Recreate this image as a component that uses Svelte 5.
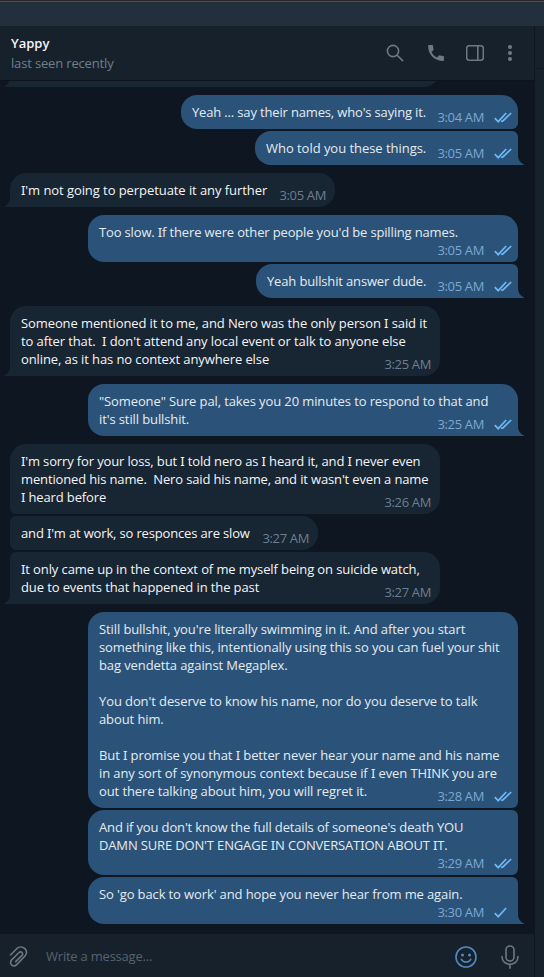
<script>
	let draft = '';

	// width and tracking are in px
	const messages = [
		{
			side: 'out', first: true, width: 337, tracking: -0.16, time: '3:04 AM',
			lines: ["Yeah ... say their names, who's saying it."]
		},
		{ side: 'out', last: true, width: 263, tracking: -0.04, time: '3:05 AM', lines: ['Who told you these things.'] },
		{
			side: 'in', first: true, last: true, width: 325, tracking: -0.07, time: '3:05 AM',
			lines: ["I'm not going to perpetuate it any further"]
		},
		{
			side: 'out', first: true, tall: true, width: 430, tracking: -0.15, time: '3:05 AM',
			lines: ["Too slow. If there were other people you'd be spilling names."]
		},
		{ side: 'out', last: true, width: 262, tracking: -0.15, time: '3:05 AM', lines: ['Yeah bullshit answer dude.'] },
		{
			side: 'in', first: true, last: true, width: 430, tracking: -0.1, time: '3:25 AM',
			lines: [
				'Someone mentioned it to me, and Nero was the only person I said it',
				"to after that.  I don't attend any local event or talk to anyone else",
				'online, as it has no context anywhere else'
			]
		},
		{
			side: 'out', first: true, last: true, width: 430, tracking: -0.11, time: '3:25 AM',
			lines: ['"Someone" Sure pal, takes you 20 minutes to respond to that and', "it's still bullshit."]
		},
		{
			side: 'in', first: true, width: 430, tracking: -0.14, time: '3:26 AM',
			lines: [
				"I'm sorry for your loss, but I told nero as I heard it, and I never even",
				"mentioned his name.  Nero said his name, and it wasn't even a name",
				'I heard before'
			]
		},
		{ side: 'in', width: 308, tracking: -0.16, time: '3:27 AM', lines: ["and I'm at work, so responces are slow"] },
		{
			side: 'in', last: true, width: 430, tracking: -0.11, time: '3:27 AM',
			lines: [
				'It only came up in the context of me myself being on suicide watch,',
				'due to events that happened in the past'
			]
		},
		{
			side: 'out', first: true, width: 430, tracking: -0.1, time: '3:28 AM',
			lines: [
				"Still bullshit, you're literally swimming in it. And after you start",
				'something like this, intentionally using this so you can fuel your shit',
				'bag vendetta against Megaplex.',
				'',
				"You don't deserve to know his name, nor do you deserve to talk",
				'about him.',
				'',
				'But I promise you that I better never hear your name and his name',
				'in any sort of synonymous context because if I even THINK you are',
				'out there talking about him, you will regret it.'
			]
		},
		{
			side: 'out', tall: true, width: 430, tracking: -0.15, time: '3:29 AM',
			lines: [
				"And if you don't know the full details of someone's death YOU",
				"DAMN SURE DON'T ENGAGE IN CONVERSATION ABOUT IT."
			]
		},
		{
			side: 'out', last: true, tall: true, unread: true, width: 430, tracking: -0.12, time: '3:30 AM',
			lines: ["So 'go back to work' and hope you never hear from me again."]
		}
	];
</script>

<div class="window">
	<div class="titlebar"></div>
	<div class="columns">
		<main class="chat">
			<header>
				<div class="peer">
					<h1>Yappy</h1>
					<p>last seen recently</p>
				</div>
				<div class="actions">
					<button aria-label="Search">
						<svg width="18" height="18" viewBox="0 0 18 18">
							<circle cx="7" cy="7" r="5.6" />
							<path d="M11.2 11.2L16.6 16.6" />
						</svg>
					</button>
					<button class="call" aria-label="Call">
						<svg width="18" height="18" viewBox="0 0 18 18">
							<path
								class="solid"
								d="M2 1h3.2c.5 0 .9.4.9.9 0 1.2.2 2.3.5 3.3.1.4 0 .7-.3 1L4.5 8c1.3 2.5 3 4.2 5.5 5.5l1.9-1.9c.3-.3.6-.4 1-.2 1 .3 2.1.5 3.2.5.5 0 .9.4.9.9V16c0 .5-.4.9-.9.9C7.6 16.9 1.1 10.4 1.1 1.9 1.1 1.4 1.5 1 2 1z"
							/>
						</svg>
					</button>
					<button aria-label="Info panel">
						<svg width="18" height="18" viewBox="0 0 18 18">
							<rect x="0.7" y="1.7" width="16.6" height="14.6" rx="2.5" />
							<path d="M11.8 1.7v14.6" />
						</svg>
					</button>
					<button aria-label="Menu">
						<svg width="18" height="18" viewBox="0 0 18 18">
							<circle class="solid" cx="9" cy="3" r="2.1" />
							<circle class="solid" cx="9" cy="9" r="2.1" />
							<circle class="solid" cx="9" cy="15" r="2.1" />
						</svg>
					</button>
				</div>
			</header>

			<section class="history">
				<div class="row in first last partial">
					<div class="bubble"></div>
					<svg class="tail" width="6" height="10" viewBox="0 0 6 10"><path d="M6 0v10H0v-.6C3.5 8.2 6 4.5 6 0z" /></svg>
				</div>
				{#each messages as message}
					<div
						class="row {message.side}"
						class:first={message.first}
						class:last={message.last}
						class:tall={message.tall}
					>
						<div class="bubble" style="width: {message.width}px">
							<div class="text" style="letter-spacing: {message.tracking}px">
								{#each message.lines as line}
									<!-- capital I is set in a face with serifs on it, to tell it from l -->
									<p>{#each line.split(/(I)/) as part}{#if part === 'I'}<span class="cap-i">I</span>{:else}{part}{/if}{/each}</p>
								{/each}
							</div>
							<div class="meta">
								<time>{message.time}</time>
								{#if message.side === 'out'}
									<svg class="checks" width="18" height="11" viewBox="0 0 18 11">
										{#if message.unread}
											<path d="M.8 6.2l3.4 3.5L12.2 1" />
										{:else}
											<path d="M.8 6.2l3.4 3.5L12.2 1M8.2 9.7L17.2 1M7.3 8.7l1 1" />
										{/if}
									</svg>
								{/if}
							</div>
						</div>
						{#if message.last}
							<svg class="tail" width="6" height="10" viewBox="0 0 6 10"><path d="M6 0v10H0v-.6C3.5 8.2 6 4.5 6 0z" /></svg>
						{/if}
					</div>
				{/each}
			</section>

			<footer>
				<button class="attach" aria-label="Attach">
					<svg width="20" height="22" viewBox="0 0 20 22">
						<path
							d="M1.5 9L7.7 2.7c2.6-2.5 6-2.1 8.2-.1 2.2 2.1 2.2 5.2.1 7.4l-8.3 8.6c-1.5 1.6-3.7 1.6-5.1.3-1.4-1.4-1.4-3.5.1-5L10 6.5c.9-.9 2.2-.9 3 0 .8.8.8 2 0 2.9L6.7 15.6"
						/>
					</svg>
				</button>
				<input placeholder="Write a message..." bind:value={draft} />
				<button class="emoji" aria-label="Emoji">
					<svg width="22" height="22" viewBox="0 0 22 22">
						<circle cx="11" cy="11" r="10" />
						<circle class="solid" cx="7.5" cy="9" r="1.5" />
						<circle class="solid" cx="14.5" cy="9" r="1.5" />
						<path d="M6.3 13.3c2 3.6 7.4 3.6 9.4 0" />
					</svg>
				</button>
				<button class="voice" aria-label="Record voice message">
					<svg width="18" height="24" viewBox="0 0 18 24">
						<rect x="5" y="1" width="8" height="15" rx="4" />
						<path d="M1 11.5c0 10.5 16 10.5 16 0M9 19.5V23.2" />
					</svg>
				</button>
			</footer>
		</main>
		<aside>
			<div class="aside-top"></div>
		</aside>
	</div>
</div>

<style>
	:global(body) {
		background: #0e1621;
	}

	.window {
		display: flex;
		flex-direction: column;
		width: 544px;
		height: 977px;
		overflow: hidden;
		font-family: 'Open Sans', 'Noto Sans', sans-serif;
		font-size: 13px;
	}

	.titlebar {
		flex: none;
		box-sizing: border-box;
		height: 26px;
		background: #242f3d;
		border-top: 1px solid #2b272b;
		box-shadow: inset 0 1px #4f4a4c;
	}

	.columns {
		flex: 1;
		display: flex;
		min-height: 0;
	}

	.chat {
		flex: 1;
		display: flex;
		flex-direction: column;
		min-width: 0;
	}

	header {
		flex: none;
		display: flex;
		justify-content: space-between;
		box-sizing: border-box;
		height: 54px;
		padding: 8px 15px 0 11px;
		background: #17212b;
	}

	h1,
	p {
		margin: 0;
	}

	h1 {
		font-size: 13px;
		line-height: 19px;
		font-weight: 600;
		color: #f5f5f5;
	}

	.peer p {
		line-height: 20px;
		letter-spacing: -0.16px;
		color: #6d7f8f;
	}

	.actions {
		display: flex;
		height: 38px;
		align-items: center;
	}

	button {
		display: flex;
		padding: 0;
		border: 0;
		background: none;
		color: #6c7883;
	}

	.actions button {
		margin-left: 21px;
	}

	.actions .call {
		margin-left: 23px;
	}

	.actions button:last-child {
		margin-left: 17px;
	}

	button svg {
		fill: none;
		stroke: currentColor;
		stroke-width: 1.6;
		stroke-linecap: round;
		stroke-linejoin: round;
	}

	button .solid {
		fill: currentColor;
		stroke: none;
	}

	.history {
		flex: 1;
		min-height: 0;
		overflow: hidden;
		border-top: 1px solid #0c131c;
		box-sizing: border-box;
		background: #0e1621;
	}

	.row {
		display: flex;
		align-items: flex-end;
		margin-top: 2px;
	}

	.row.first {
		margin-top: 8px;
	}

	.row.in {
		padding-left: 10px;
		color: #182533;
	}

	.row.out {
		padding-right: 16px;
		justify-content: flex-end;
		color: #2b5278;
	}

	.row.partial {
		margin-top: -28px;
	}

	.partial .bubble {
		width: 430px;
		height: 34px;
	}

	.bubble {
		display: grid;
		grid-template-columns: minmax(0, 1fr);
		flex: none;
		box-sizing: border-box;
		padding: 8px 11px;
		background: currentColor;
	}

	.in .bubble {
		border-radius: 6px 16px 16px 6px;
	}

	.in.first .bubble {
		border-top-left-radius: 16px;
	}

	.in.last .bubble {
		border-bottom-left-radius: 0;
	}

	.out .bubble {
		border-radius: 16px 6px 6px 16px;
	}

	.out.first .bubble {
		border-top-right-radius: 16px;
	}

	.out.last .bubble {
		border-bottom-right-radius: 0;
	}

	.tall .bubble {
		padding-bottom: 21px;
	}

	.tail {
		flex: none;
		fill: currentColor;
	}

	.in .tail {
		order: -1;
		margin-left: -6px;
	}

	.out .tail {
		margin-right: -6px;
		transform: scaleX(-1);
	}

	/* text and timestamp share one grid cell so the time tucks in beside the last line */
	.text,
	.meta {
		grid-area: 1 / 1;
	}

	.text {
		color: #f5f5f5;
	}

	.text p {
		width: max-content;
		height: 18px;
		line-height: 18px;
		white-space: pre;
	}

	.cap-i {
		font-family: 'Noto Sans', sans-serif;
	}

	.out .text {
		color: #e4ecf2;
	}

	.meta {
		align-self: end;
		justify-self: end;
		display: flex;
		align-items: center;
		gap: 10px;
		height: 18px;
		margin: 0 -2px -5px 0;
		letter-spacing: -0.35px;
		color: #6d7f8f;
	}

	.out .meta {
		margin-right: -5px;
		color: #7da8d3;
	}

	.out.tall .meta {
		margin-bottom: -18px;
	}

	.checks {
		fill: none;
		stroke: #6cb9f7;
		stroke-width: 1.7;
	}

	footer {
		flex: none;
		display: flex;
		align-items: center;
		box-sizing: border-box;
		height: 43px;
		padding: 3px 15px 0 9px;
		background: #17212b;
	}

	input {
		flex: 1;
		min-width: 0;
		margin: 0 0 2px 17px;
		padding: 0;
		border: 0;
		outline: 0;
		background: none;
		font: inherit;
		letter-spacing: -0.22px;
		color: #f5f5f5;
	}

	input::placeholder {
		color: #56636f;
		opacity: 1;
	}

	.emoji {
		color: #5288c1;
	}

	.voice {
		margin-left: 24px;
	}

	aside {
		flex: none;
		box-sizing: border-box;
		width: 10px;
		border-left: 1px solid #0e1620;
		background: #17212b;
	}

	.aside-top {
		height: 42px;
		border-bottom: 1px solid #101921;
	}
</style>
